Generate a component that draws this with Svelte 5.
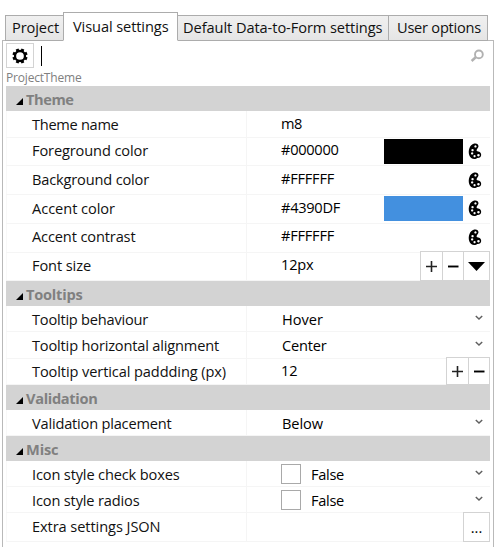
<script>
  const groups = [
    { title: 'Theme', w: 47.5, rows: [
      { label: 'Theme name', w: 86.5, h: 27, y: 3, value: 'm8', vw: 21 },
      { label: 'Foreground color', w: 116, h: 28, y: 2, value: '#000000', vw: 57.5, kind: 'color', swatch: '#000000', iy: 5 },
      { label: 'Background color', w: 117, h: 29, y: 3, value: '#FFFFFF', vw: 53, kind: 'color', iy: 6 },
      { label: 'Accent color', w: 83, h: 29, y: 3, value: '#4390DF', vw: 59, kind: 'color', swatch: '#4390df', iy: 5 },
      { label: 'Accent contrast', w: 103.5, h: 29, y: 2, value: '#FFFFFF', vw: 53, kind: 'color', iy: 5 },
      { label: 'Font size', w: 59, h: 28, y: 2, value: '12px', vw: 32.5, kind: 'stepper', menu: true }
    ] },
    { title: 'Tooltips', w: 56.5, rows: [
      { label: 'Tooltip behaviour', w: 116, h: 26, y: 3, value: 'Hover', vw: 41, kind: 'select', iy: 9 },
      { label: 'Tooltip horizontal alignment', w: 187, h: 27, y: 3, value: 'Center', vw: 44.5, kind: 'select', iy: 9 },
      { label: 'Tooltip vertical paddding (px)', w: 194, h: 26, y: 2, value: '12', vw: 16.5, kind: 'stepper' }
    ] },
    { title: 'Validation', w: 71.5, rows: [
      { label: 'Validation placement', w: 139.5, h: 26, y: 3, value: 'Below', vw: 41, kind: 'select', iy: 9 }
    ] },
    { title: 'Misc', w: 32.5, rows: [
      { label: 'Icon style check boxes', w: 147.5, h: 26, y: 3, value: 'False', vw: 33, kind: 'select', check: true, iy: 9 },
      { label: 'Icon style radios', w: 107.5, h: 26, y: 3, value: 'False', vw: 33, kind: 'select', check: true, iy: 9 },
      { label: 'Extra settings JSON', w: 128.5, h: 29, y: 3, kind: 'more' }
    ] }
  ];

  function fit(node, width) {
    const natural = node.getBoundingClientRect().width;
    node.style.letterSpacing = (width - natural) / node.textContent.length + 'px';
  }
</script>

<main>
  <nav>
    <button class="tab project"><span use:fit={47}>Project</span></button>
    <button class="tab visual active"><span use:fit={95.5}>Visual settings</span></button>
    <button class="tab data"><span use:fit={199.5}>Default Data-to-Form settings</span></button>
    <button class="tab user"><span use:fit={84}>User options</span></button>
  </nav>

  <section class="panel">
    <div class="search">
      <button class="gear" aria-label="Settings">
        <svg width="16" height="16" viewBox="-8 -8 16 16">
          <circle r="5" fill="none" stroke="#000" stroke-width="2.300" />
          {#each [22.5, 67.5, 112.5, 157.5, 202.5, 247.5, 292.5, 337.5] as a}
            <rect x="-1.5" y="-7.6" width="3" height="2.6" transform="rotate({a})" />
          {/each}
        </svg>
      </button>
      <i class="caret"></i>
      <svg class="lens" width="14" height="14" viewBox="0 0 14 14">
        <circle cx="8.900" cy="5.4" r="3.9" fill="none" stroke="#b1b1b1" stroke-width="1.900" />
        <path d="M5.7 8.300L1.6 12" stroke="#b1b1b1" stroke-width="2.500" />
      </svg>
    </div>
    <div class="path"><span use:fit={75.5}>ProjectTheme</span></div>

    <div class="grid">
      {#each groups as g}
        <div class="head">
          <svg width="7" height="7"><path d="M7 0V7H0z" /></svg>
          <span use:fit={g.w}>{g.title}</span>
        </div>
        {#each g.rows as r}
          <div class="row" style:height="{r.h}px">
            <div class="label" style:padding-top="{r.y}px"><span use:fit={r.w}>{r.label}</span></div>
            <div class="value">
              <div class="text" class:combo={r.kind === 'select'} style:padding-top="{r.kind === 'select' ? r.y : r.y - 1}px">
                {#if r.check}<i class="box"></i>{/if}
                {#if r.value}<span use:fit={r.vw}>{r.value}</span>{/if}
              </div>
              {#if r.kind === 'color'}
                {#if r.swatch}<div class="swatch" style:background={r.swatch}></div>{/if}
                <svg class="palette" style:margin-top="{r.iy}px" width="14" height="17" viewBox="0 0 14 17">
                  <path fill-rule="evenodd" d="M6.200.6C8.500 0 10.500 1.100 10.500 3.300C10.500 5 8.700 5.700 8.600 7.200C8.500 8.300 9.800 8.300 11.200 8.800C13.700 9.800 13.800 13.300 11.800 14.500C10.600 15.200 9.400 14.700 8.500 15.400C5.700 16.900 2.300 15.400 1.200 12C0 8 1.400 1.800 6.200.6zM7.400 2.300a1.150 1.150 0 1 0 .1 0zM4.500 5.900a1.200 1.200 0 1 0 .1 0zM4.100 9.200a1.150 1.150 0 1 0 .1 0zM6.500 12a1.100 1.100 0 1 0 .1 0zM10.400 10.900a1.300 1.300 0 1 0 .1 0z" />
                </svg>
              {:else if r.kind === 'select'}
                <svg class="chevron" style:margin-top="{r.iy}px" width="8" height="6" viewBox="0 0 8 6">
                  <path d="M.8 1L4 4L7.200 1" fill="none" stroke="#606060" stroke-width="1.5" />
                </svg>
              {:else if r.kind === 'stepper'}
                <div class="stepper" class:wide={r.menu}>
                  <button aria-label="Increase"><svg width="11" height="11"><path d="M0 5.500H11M5.500 0V11" stroke="#222" stroke-width="1.6" /></svg></button>
                  <button aria-label="Decrease"><svg width="11" height="11"><path d="M0 5.500H10.500" stroke="#000" stroke-width="1.9" /></svg></button>
                  {#if r.menu}
                    <button class="last" aria-label="Sizes"><svg width="17" height="11"><path d="M0 1H17L8.500 10z" /></svg></button>
                  {/if}
                </div>
              {:else if r.kind === 'more'}
                <button class="more">...</button>
              {/if}
            </div>
          </div>
        {/each}
      {/each}
    </div>
  </section>
</main>

<style>
  :global(body) { background: #fff; overflow: hidden; }
  * { box-sizing: border-box; }
  main {
    width: 496px; height: 547px; padding-top: 12px; overflow: hidden;
    font: 14.6px/20px "Open Sans", "Noto Sans", sans-serif; color: #111; background: #fff;
  }
  button { font: inherit; color: inherit; padding: 0; margin: 0; border: 0; background: #fff; border-radius: 0; }
  span { display: inline-block; white-space: pre; }
  svg { display: block; flex: none; }

  nav { display: flex; align-items: flex-end; height: 29px; padding-left: 5px; position: relative; z-index: 1; }
  .tab {
    display: flex; height: 26px; padding-top: 1px;
    border: 1px solid #acacac; background: linear-gradient(#f0f0f0, #e5e5e5);
  }
  .project { width: 59px; padding-left: 6px; }
  .visual { width: 115px; padding-left: 9px; margin-left: -1px; }
  .data { width: 212px; padding-left: 5px; margin-left: -1px; }
  .user { width: 100px; padding-left: 8px; margin-left: -1px; }
  .active { height: 29px; padding-top: 3px; background: #fff; border-bottom-color: #fff; position: relative; z-index: 1; }

  .panel {
    width: 492px; height: 520px; margin: -1px 0 0 2px; padding: 2px 3px 0 3px;
    border: 1px solid #b9b9b9; border-bottom: 0;
  }
  .search { display: flex; height: 25px; }
  .gear { display: flex; align-items: center; justify-content: center; width: 28px; height: 25px; padding-right: 1px; border: 1px solid #d3d3d3; }
  .caret { width: 1px; height: 20px; margin: 3px 0 0 7px; background: #000; }
  .lens { margin: 6px 6px 0 auto; }
  .path { height: 18px; padding-top: 2px; font-size: 12px; line-height: 16px; color: #808080; }

  .grid { width: 484px; }
  .head { display: flex; height: 25px; padding: 3px 0 0 10px; background: #d3d3d3; color: #808080; font-weight: 700; }
  .head svg { margin: 9px 3px 0 0; fill: #000; }
  .row { display: flex; border-bottom: 1px solid #f5f5f5; }
  .label { width: 241px; padding-left: 25px; border-right: 1px solid #f5f5f5; border-left: 1px solid #f8f8f8; margin-right: -1px; }
  .value { display: flex; flex: 1; padding-left: 35px; color: #000; }
  .text { display: flex; flex: 1; }
  .combo { padding-left: 1px; }
  .box { width: 20px; height: 20px; margin: 0 10px 0 -1px; border: 1px solid #a9a9a9; background: #fff; }
  .swatch { width: 79px; height: 25px; margin: 1px 5px 0 0; }
  .palette { margin-right: 8px; }
  .chevron { margin-right: 7.500px; }
  .stepper { display: flex; height: 28px; margin-top: -2px; border: 1px solid #d3d3d3; background: #fff; position: relative; }
  .stepper button { display: flex; align-items: center; justify-content: center; width: 21px; }
  .stepper button + button { border-left: 1px solid #d3d3d3; }
  .stepper.wide { height: 30px; }
  .stepper button.last { width: 26px; }
  .more { width: 27px; height: 30px; margin-top: -1px; padding-top: 0; border: 1px solid #d3d3d3; position: relative; }
</style>
